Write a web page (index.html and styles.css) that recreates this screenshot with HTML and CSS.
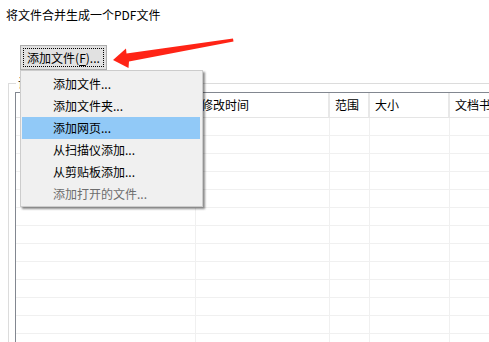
FILE: index.html
```html
<!DOCTYPE html>
<html lang="zh-CN">
<head>
<meta charset="utf-8">
<title>合并PDF</title>
<link rel="stylesheet" href="styles.css">
</head>
<body>
<div class="window">
  <div class="title">将文件合并生成一个PDF文件</div>
  <div class="toolbar">
    <button class="btn"><span class="focus">添加文件(<u>F</u>)...</span></button>
  </div>
  <div class="group">
    <span class="group-label">设置</span>
    <div class="list">
      <div class="row head">
        <div class="cell">名称</div>
        <div class="cell">修改时间</div>
        <div class="cell">范围</div>
        <div class="cell">大小</div>
        <div class="cell">文档书签</div>
      </div>
      <div class="row"><div class="cell"></div><div class="cell"></div><div class="cell"></div><div class="cell"></div><div class="cell"></div></div>
      <div class="row"><div class="cell"></div><div class="cell"></div><div class="cell"></div><div class="cell"></div><div class="cell"></div></div>
      <div class="row"><div class="cell"></div><div class="cell"></div><div class="cell"></div><div class="cell"></div><div class="cell"></div></div>
      <div class="row"><div class="cell"></div><div class="cell"></div><div class="cell"></div><div class="cell"></div><div class="cell"></div></div>
      <div class="row"><div class="cell"></div><div class="cell"></div><div class="cell"></div><div class="cell"></div><div class="cell"></div></div>
      <div class="row"><div class="cell"></div><div class="cell"></div><div class="cell"></div><div class="cell"></div><div class="cell"></div></div>
      <div class="row"><div class="cell"></div><div class="cell"></div><div class="cell"></div><div class="cell"></div><div class="cell"></div></div>
      <div class="row"><div class="cell"></div><div class="cell"></div><div class="cell"></div><div class="cell"></div><div class="cell"></div></div>
      <div class="row"><div class="cell"></div><div class="cell"></div><div class="cell"></div><div class="cell"></div><div class="cell"></div></div>
      <div class="row"><div class="cell"></div><div class="cell"></div><div class="cell"></div><div class="cell"></div><div class="cell"></div></div>
      <div class="row"><div class="cell"></div><div class="cell"></div><div class="cell"></div><div class="cell"></div><div class="cell"></div></div>
      <div class="row"><div class="cell"></div><div class="cell"></div><div class="cell"></div><div class="cell"></div><div class="cell"></div></div>
      <div class="row"><div class="cell"></div><div class="cell"></div><div class="cell"></div><div class="cell"></div><div class="cell"></div></div>
    </div>
  </div>

  <ul class="menu">
    <li class="item">添加文件...</li>
    <li class="item">添加文件夹...</li>
    <li class="item active">添加网页...</li>
    <li class="item">从扫描仪添加...</li>
    <li class="item">从剪贴板添加...</li>
    <li class="item disabled">添加打开的文件...</li>
  </ul>

  <svg class="arrow" width="489" height="342" viewBox="0 0 489 342" aria-hidden="true">
    <polygon points="113,60 126,48.5 126.5,53.5 233,38.5 233.5,41.5 129,61.5 128.5,68" fill="#ff2416"/>
  </svg>
</div>
</body>
</html>
```

FILE: styles.css
```css
* { box-sizing: border-box; }

html, body {
  margin: 0;
  padding: 0;
  background: #ffffff;
  overflow: hidden;
}

body {
  font-family: "Noto Sans CJK SC", "Noto Sans", "Liberation Sans", sans-serif;
  font-size: 12px;
  color: #000;
}

.window {
  position: relative;
  width: 489px;
  height: 342px;
  overflow: hidden;
}

.title {
  height: 45px;
  padding: 7px 0 0 6px;
  line-height: 16px;
}

.toolbar {
  display: flex;
  padding-left: 20px;
}

.btn {
  width: 87px;
  height: 25px;
  padding: 2px;
  margin: 0;
  background: #e1e1e1;
  border: 1px solid #adadad;
  font: inherit;
  color: #000;
  display: flex;
}

.btn .focus {
  flex: 1;
  border: 1px dotted #000;
  display: flex;
  align-items: center;
  justify-content: center;
  line-height: 14px;
  white-space: nowrap;
}

.btn u { text-underline-offset: 2px; }

.group {
  position: relative;
  margin: 13px 0 0 8px;
  border-top: 1px solid #dcdcdc;
  border-left: 1px solid #dcdcdc;
  padding: 8px 0 0 6px;
}

.group-label {
  position: absolute;
  top: -9px;
  left: 7px;
  padding: 0 2px;
  background: #fff;
  line-height: 16px;
}

.list {
  border-top: 1px solid #828790;
  border-left: 1px solid #828790;
  background: #fff;
}

.row {
  display: grid;
  grid-template-columns: 180px 134px 40px 80px 200px;
  height: 18px;
  border-bottom: 1px solid #f0f0f0;
}

.row.head {
  height: 25px;
  border-bottom: 1px solid #e5e5e5;
}

.cell {
  border-right: 1px solid #f0f0f0;
  white-space: nowrap;
  overflow: hidden;
}

.row.head .cell {
  border-right: 2px solid #e8e8e8;
  display: flex;
  align-items: center;
  padding-left: 5px;
  line-height: 16px;
}

.menu {
  position: absolute;
  left: 20px;
  top: 70px;
  width: 183px;
  margin: 0;
  padding: 2px 2px 1px 1px;
  list-style: none;
  background: #f0f0f0;
  border: 1px solid #cccccc;
  box-shadow: 2px 2px 2px rgba(0, 0, 0, 0.45);
}

.item {
  height: 22px;
  line-height: 22px;
  padding-left: 31px;
  color: #000;
  white-space: nowrap;
}

.item.active { background: #91c9f7; }

.item.disabled { color: #6d6d6d; }

.arrow {
  position: absolute;
  left: 0;
  top: 0;
  pointer-events: none;
}
```
